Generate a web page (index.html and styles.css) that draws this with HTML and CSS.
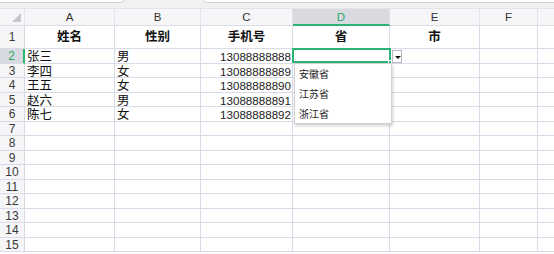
FILE: index.html
```html
<!DOCTYPE html>
<html lang="zh">
<head>
<meta charset="utf-8">
<title>Sheet</title>
<link rel="stylesheet" href="styles.css">
</head>
<body>
<div class="topbar">
  <div class="box box-left"></div>
  <div class="box box-right"></div>
</div>
<div class="sheet">
  <div class="row colhead">
    <div class="corner"><span class="tri"></span></div>
    <div class="ch">A</div><div class="ch">B</div><div class="ch">C</div>
    <div class="ch ch-sel">D</div><div class="ch">E</div><div class="ch">F</div><div class="ch"></div>
  </div>
  <div class="row r1">
    <div class="rh">1</div>
    <div class="c head">姓名</div><div class="c head">性别</div><div class="c head">手机号</div>
    <div class="c head">省</div><div class="c head">市</div><div class="c"></div><div class="c"></div>
  </div>
  <div class="row">
    <div class="rh rh-sel">2</div>
    <div class="c">张三</div><div class="c">男</div><div class="c num">13088888888</div>
    <div class="c"></div><div class="c"></div><div class="c"></div><div class="c"></div>
  </div>
  <div class="row">
    <div class="rh">3</div>
    <div class="c">李四</div><div class="c">女</div><div class="c num">13088888889</div>
    <div class="c"></div><div class="c"></div><div class="c"></div><div class="c"></div>
  </div>
  <div class="row">
    <div class="rh">4</div>
    <div class="c">王五</div><div class="c">女</div><div class="c num">13088888890</div>
    <div class="c"></div><div class="c"></div><div class="c"></div><div class="c"></div>
  </div>
  <div class="row">
    <div class="rh">5</div>
    <div class="c">赵六</div><div class="c">男</div><div class="c num">13088888891</div>
    <div class="c"></div><div class="c"></div><div class="c"></div><div class="c"></div>
  </div>
  <div class="row">
    <div class="rh">6</div>
    <div class="c">陈七</div><div class="c">女</div><div class="c num">13088888892</div>
    <div class="c"></div><div class="c"></div><div class="c"></div><div class="c"></div>
  </div>
  <div class="row"><div class="rh">7</div><div class="c"></div><div class="c"></div><div class="c"></div><div class="c"></div><div class="c"></div><div class="c"></div><div class="c"></div></div>
  <div class="row"><div class="rh">8</div><div class="c"></div><div class="c"></div><div class="c"></div><div class="c"></div><div class="c"></div><div class="c"></div><div class="c"></div></div>
  <div class="row"><div class="rh">9</div><div class="c"></div><div class="c"></div><div class="c"></div><div class="c"></div><div class="c"></div><div class="c"></div><div class="c"></div></div>
  <div class="row"><div class="rh">10</div><div class="c"></div><div class="c"></div><div class="c"></div><div class="c"></div><div class="c"></div><div class="c"></div><div class="c"></div></div>
  <div class="row"><div class="rh">11</div><div class="c"></div><div class="c"></div><div class="c"></div><div class="c"></div><div class="c"></div><div class="c"></div><div class="c"></div></div>
  <div class="row"><div class="rh">12</div><div class="c"></div><div class="c"></div><div class="c"></div><div class="c"></div><div class="c"></div><div class="c"></div><div class="c"></div></div>
  <div class="row"><div class="rh">13</div><div class="c"></div><div class="c"></div><div class="c"></div><div class="c"></div><div class="c"></div><div class="c"></div><div class="c"></div></div>
  <div class="row"><div class="rh">14</div><div class="c"></div><div class="c"></div><div class="c"></div><div class="c"></div><div class="c"></div><div class="c"></div><div class="c"></div></div>
  <div class="row"><div class="rh">15</div><div class="c"></div><div class="c"></div><div class="c"></div><div class="c"></div><div class="c"></div><div class="c"></div><div class="c"></div></div>

  <div class="selbox"><span class="handle"></span></div>
  <div class="ddbtn"><span class="arrow"></span></div>
  <ul class="dropdown">
    <li>安徽省</li>
    <li>江苏省</li>
    <li>浙江省</li>
  </ul>
</div>
</body>
</html>
```
FILE: styles.css
```css
* { box-sizing: border-box; }
html, body {
  margin: 0;
  padding: 0;
  background: #ffffff;
  width: 554px;
  height: 254px;
  overflow: hidden;
  font-family: "Liberation Sans", "Noto Sans CJK SC", sans-serif;
  color: #222;
}
.topbar {
  height: 9px;
  background: #f1f1f3;
  position: relative;
  border-bottom: 1px solid #e4e4e8;
  overflow: hidden;
}
.box {
  position: absolute;
  top: -6px;
  height: 9px;
  background: #fff;
  border: 1px solid #d2d2d6;
  border-radius: 3px;
}
.box-left { left: -4px; width: 128px; }
.box-right { left: 203px; width: 400px; }

.sheet { position: relative; }
.row {
  display: grid;
  grid-template-columns: 25px 90px 86px 92px 97px 90px 58px 40px;
  height: 14.5px;
}
.row > div {
  border-right: 1px solid #d9dbe8;
  border-bottom: 1px solid #d9dbe8;
  overflow: hidden;
  white-space: nowrap;
}
.colhead { height: 17px; }
.colhead > div {
  background: #f6f6f8;
  border-right: 1px solid #e2e3ea;
  border-bottom: 1px solid #dcdde4;
}
.corner { position: relative; }
.tri {
  position: absolute;
  right: 3px;
  bottom: 3px;
  width: 0;
  height: 0;
  border-left: 9px solid transparent;
  border-bottom: 9px solid #c4c6cc;
}
.ch {
  font-size: 11.5px;
  line-height: 16px;
  text-align: center;
  color: #333;
}
.colhead > .ch-sel {
  background: #d8dadf;
  color: #2aa86a;
  border-bottom: 2px solid #2eb377;
}
.r1 { height: 23px; }
.rh {
  background: #f6f6f8;
  font-size: 12px;
  line-height: 15px;
  text-align: center;
  color: #3a3a3a;
}
.row > .rh { border-right: 1px solid #d6d8e2; }
.r1 .rh { line-height: 22px; }
.row > .rh-sel {
  background: #d8dadf;
  color: #2aa86a;
  border-right: 2px solid #2eb377;
}
.c {
  font-size: 12.5px;
  line-height: 16px;
  padding-left: 2px;
  color: #111;
}
.head {
  text-align: center;
  font-weight: bold;
  font-size: 12.5px;
  line-height: 22px;
  padding-left: 0;
}
.num {
  text-align: right;
  padding-right: 1px;
  font-size: 11.6px;
  line-height: 16px;
  color: #222;
}
.selbox {
  position: absolute;
  left: 292px;
  top: 39px;
  width: 99px;
  height: 15px;
  border: 2px solid #2eb377;
}
.handle {
  position: absolute;
  right: -3px;
  bottom: -3px;
  width: 4px;
  height: 4px;
  background: #2eb377;
  border: 1px solid #fff;
}
.ddbtn {
  position: absolute;
  left: 392px;
  top: 41px;
  width: 10px;
  height: 13px;
  background: #fff;
  border: 1px solid #b8b8bc;
}
.arrow {
  position: absolute;
  left: 2px;
  top: 5px;
  width: 0;
  height: 0;
  border-left: 3px solid transparent;
  border-right: 3px solid transparent;
  border-top: 3px solid #111;
}
.dropdown {
  position: absolute;
  left: 294px;
  top: 54px;
  width: 98px;
  height: 61px;
  margin: 0;
  padding: 0;
  list-style: none;
  background: #fff;
  border: 1px solid #d0d0d4;
  box-shadow: 1px 2px 3px rgba(0,0,0,0.18);
}
.dropdown li {
  height: 20px;
  line-height: 19px;
  padding-left: 4px;
  font-size: 10px;
  color: #222;
  font-family: "Noto Sans CJK SC", sans-serif;
}
```
